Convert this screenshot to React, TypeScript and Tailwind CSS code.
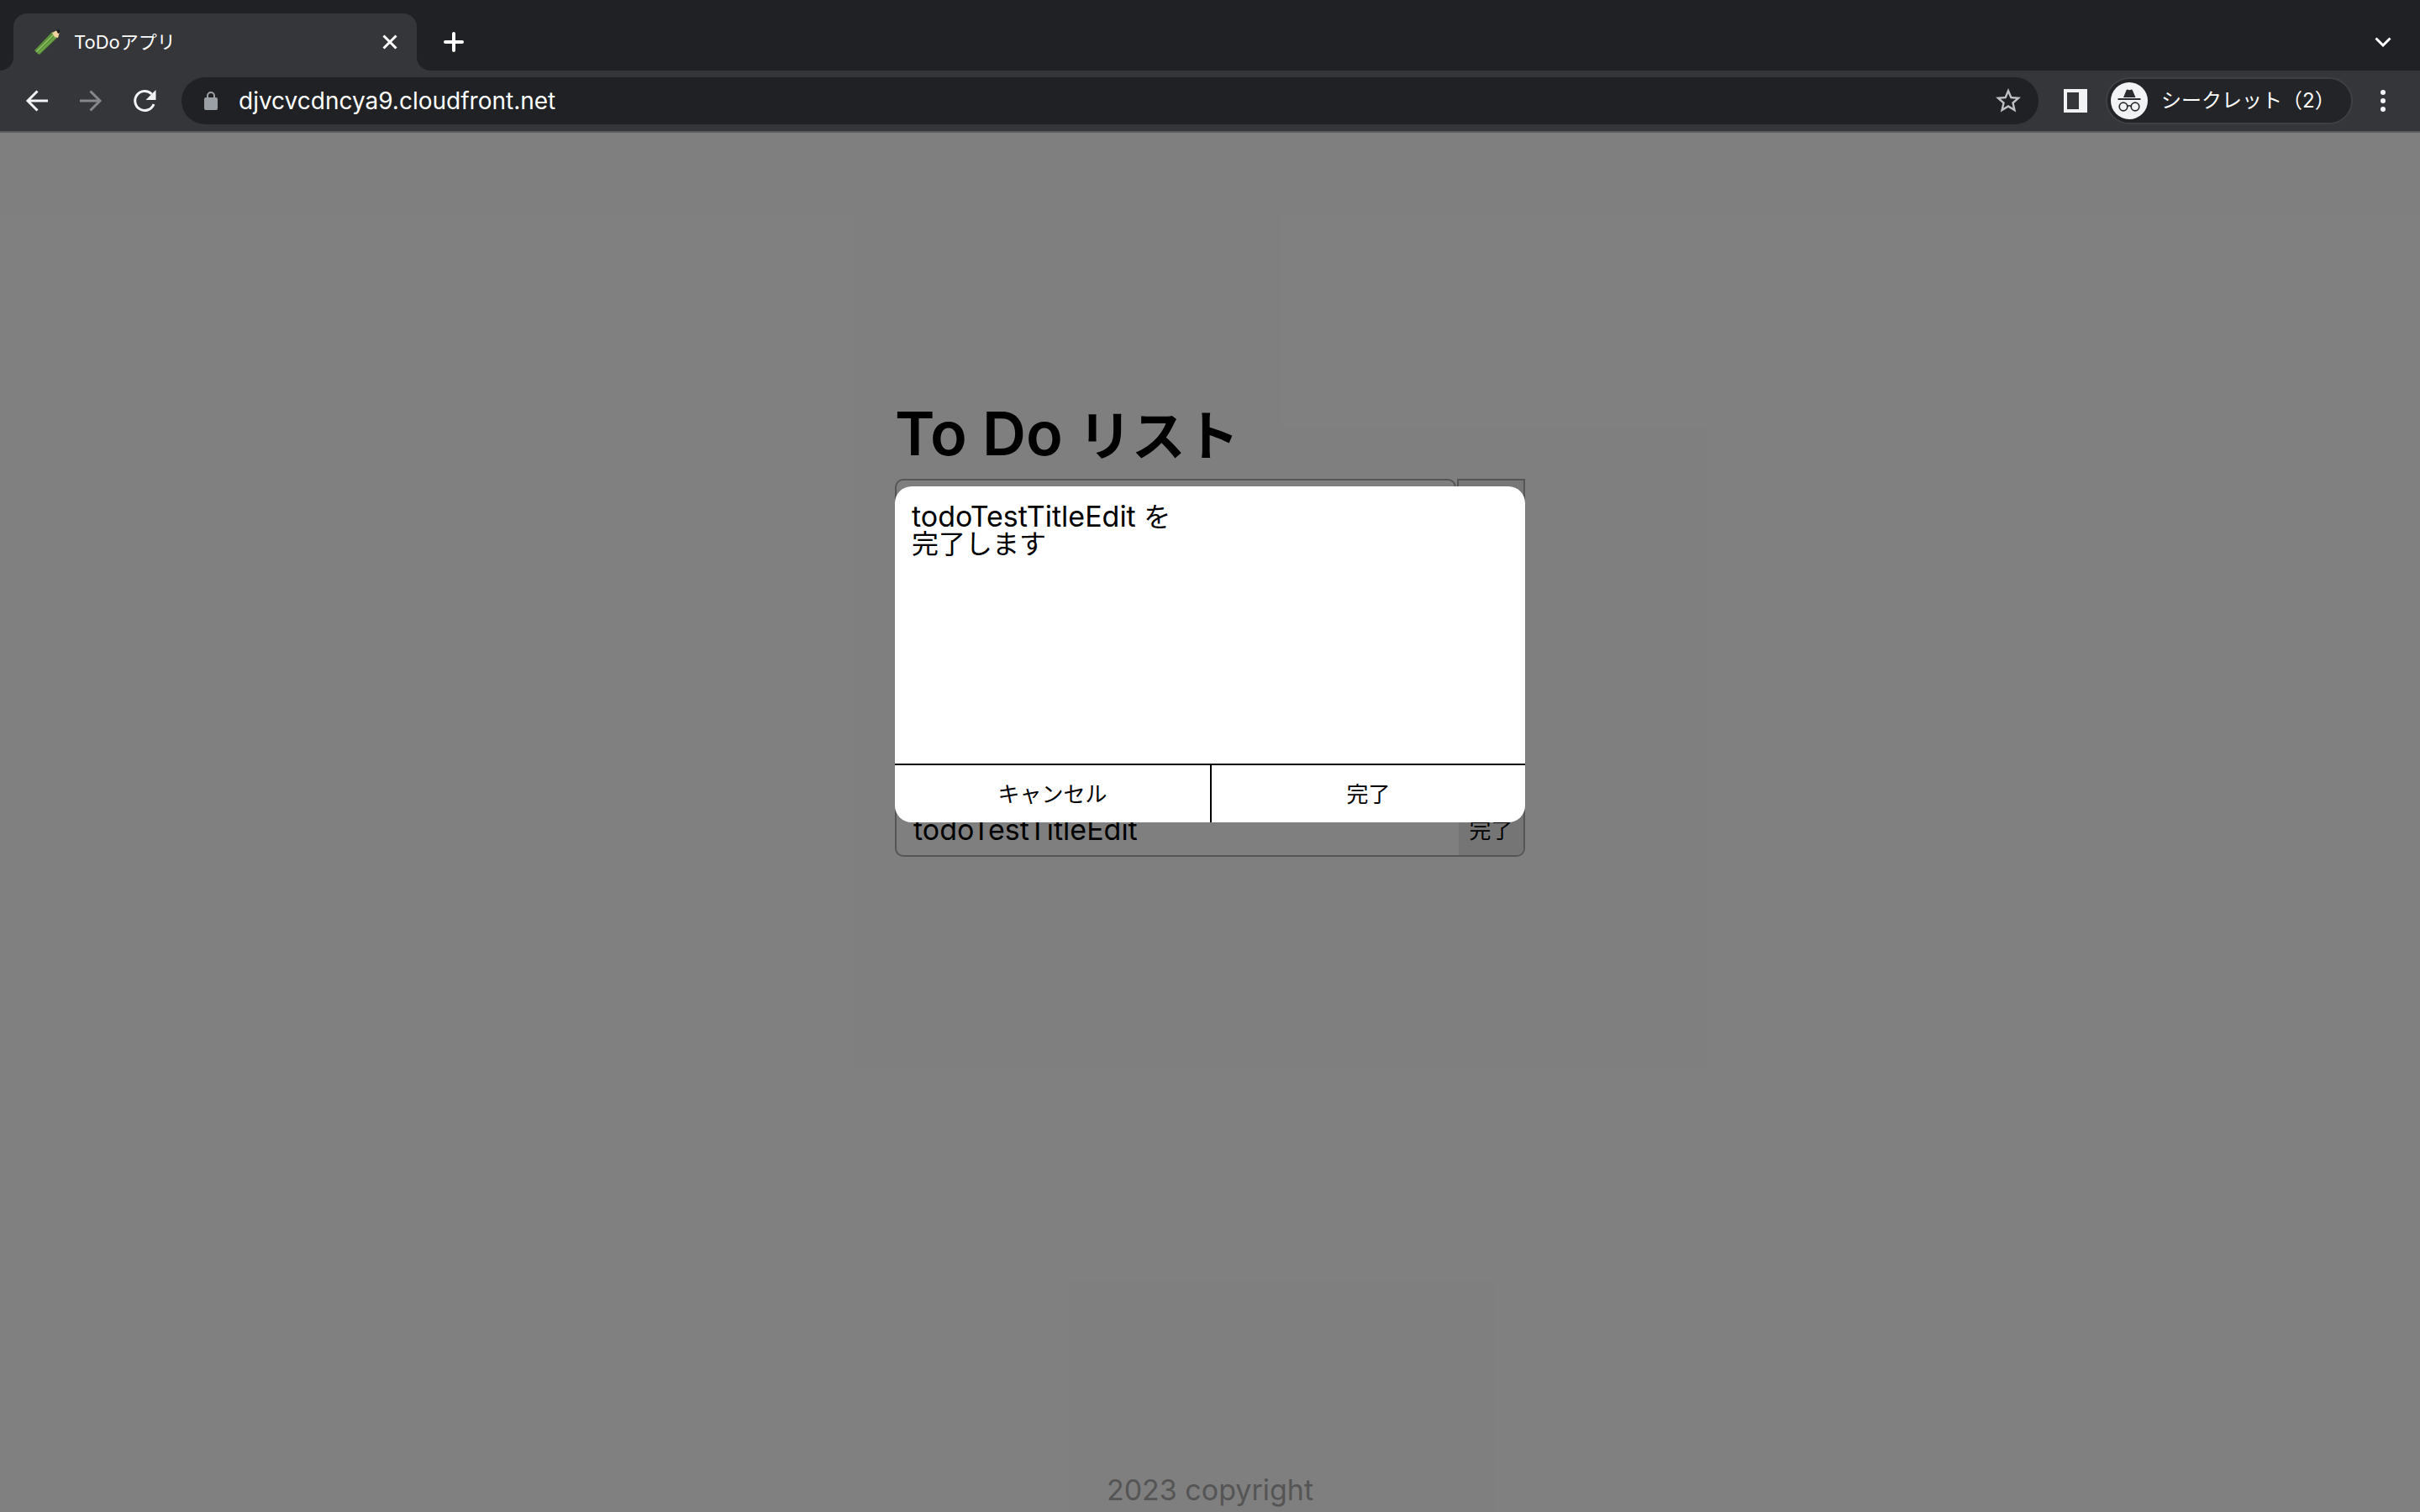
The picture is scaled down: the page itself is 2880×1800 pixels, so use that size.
import React from "react";

function PencilIcon() {
  return (
    <svg viewBox="0 0 32 32" className="size-8 shrink-0" aria-hidden="true">
      <path d="M1 26 22 4l7 6L7 31Z" fill="#5b9138" />
      <path d="M3 28 25 6" stroke="#8fbd68" strokeWidth="1.6" />
      <path d="M5 30 27 9" stroke="#74aa4c" strokeWidth="1.4" />
      <path d="m22 5 6-3 3 2-2 7-4-1Z" fill="#f2d3a0" />
      <path d="m27 2 4-1v4l-2 1Z" fill="#1b1b1b" />
    </svg>
  );
}

function BackIcon() {
  return (
    <svg viewBox="0 0 32 32" className="size-8" fill="none" stroke="currentColor" strokeWidth="3" aria-hidden="true">
      <path d="M29 16H5M16.500 4.500 5 16l11.500 11.500" />
    </svg>
  );
}

function ForwardIcon() {
  return (
    <svg viewBox="0 0 32 32" className="size-8" fill="none" stroke="currentColor" strokeWidth="3" aria-hidden="true">
      <path d="M3 16h24M15.500 4.500 27 16 15.500 27.500" />
    </svg>
  );
}

function ReloadIcon() {
  return (
    <svg viewBox="0 0 32 32" className="size-8" aria-hidden="true">
      <path d="M27 20a11.500 11.500 0 1 1-2.500-12" fill="none" stroke="currentColor" strokeWidth="3" />
      <path d="M29.500 3v12h-12Z" fill="currentColor" />
    </svg>
  );
}

function LockIcon() {
  return (
    <svg viewBox="0 0 18 24" className="h-6 w-[18px] shrink-0 text-[#9aa0a6]" aria-hidden="true">
      <rect x="1" y="8" width="16" height="15" rx="2" fill="currentColor" />
      <path d="M5 9V6a4 4 0 0 1 8 0v3" fill="none" stroke="currentColor" strokeWidth="2" />
    </svg>
  );
}

function StarIcon() {
  return (
    <svg viewBox="0 0 24 24" className="size-9" fill="currentColor" aria-hidden="true">
      <path d="m22 9.240-7.190-.62L12 2 9.190 8.630 2 9.240l5.460 4.730L5.820 21 12 17.270 18.180 21l-1.630-7.030L22 9.240zM12 15.400l-3.760 2.270 1-4.280-3.320-2.880 4.380-.38L12 6.100l1.710 4.040 4.380.38-3.320 2.880 1 4.280L12 15.400z" />
    </svg>
  );
}

function PanelIcon() {
  return (
    <svg viewBox="0 0 28 28" className="size-7" aria-hidden="true">
      <path d="M0 0h28v28H0ZM4 4v20h14V4Z" fill="#f1f3f4" fillRule="evenodd" />
    </svg>
  );
}

function IncognitoIcon() {
  return (
    <svg viewBox="0 0 44 44" className="size-11 shrink-0" aria-hidden="true">
      <circle cx="22" cy="22" r="22" fill="#f1f3f4" />
      <path d="m15 18 3.500-8.500q.5-1.200 1.800-.8l1.900.6 1.900-.6q1.300-.4 1.800.8L29.500 18Z" fill="#2b2c30" />
      <path d="M8.500 20h27" stroke="#2b2c30" strokeWidth="2" />
      <g fill="none" stroke="#2b2c30" strokeWidth="1.700">
        <circle cx="15" cy="29" r="4.800" />
        <circle cx="29" cy="29" r="4.800" />
        <path d="M19.800 28.500q2.200-1.500 4.400 0" />
      </g>
    </svg>
  );
}

function Browser() {
  return (
    <header className="font-['Inter','Noto_Sans_CJK_JP',sans-serif] text-white">
      <div className="flex h-[84px] items-end bg-[#202124]">
        <div className="size-4 bg-[#35363a]">
          <div className="size-4 rounded-br-2xl bg-[#202124]" />
        </div>
        <div className="flex h-[68px] w-[480px] items-center rounded-t-2xl bg-[#35363a] pr-4 pl-6">
          <PencilIcon />
          <span className="ml-4 grow text-[22px]">ToDoアプリ</span>
          <button type="button" aria-label="タブを閉じる" className="grid size-8 place-items-center">
            <svg viewBox="0 0 18 18" className="size-[18px]" stroke="#fff" strokeWidth="3" aria-hidden="true">
              <path d="m1.500 1.500 15 15m0-15-15 15" />
            </svg>
          </button>
        </div>
        <div className="size-4 bg-[#35363a]">
          <div className="size-4 rounded-bl-2xl bg-[#202124]" />
        </div>
        <button type="button" aria-label="新しいタブ" className="mb-[14px] ml-2 grid size-10 place-items-center">
          <svg viewBox="0 0 24 24" className="size-6" stroke="#fff" strokeWidth="4" strokeLinecap="round" aria-hidden="true">
            <path d="M12 2v20M2 12h20" />
          </svg>
        </button>
        <button type="button" aria-label="タブを検索" className="mr-6 mb-[14px] ml-auto grid size-10 place-items-center">
          <svg viewBox="0 0 20 12" className="h-3 w-5" fill="none" stroke="#fff" strokeWidth="3" aria-hidden="true">
            <path d="m1.500 1.500 8.500 8.500 8.500-8.500" />
          </svg>
        </button>
      </div>

      <div className="flex h-[74px] items-center border-b-2 border-[#5b5c5f] bg-[#35363a] pr-6 pl-7">
        <nav className="flex gap-8 text-[#f1f3f4]">
          <button type="button" aria-label="戻る"><BackIcon /></button>
          <button type="button" aria-label="進む" className="text-[#86878a]"><ForwardIcon /></button>
          <button type="button" aria-label="再読み込み"><ReloadIcon /></button>
        </nav>
        <div className="ml-7 flex h-14 grow items-center rounded-full bg-[#202124] pr-[18px] pl-[26px]">
          <LockIcon />
          <input
            aria-label="アドレスバー"
            defaultValue="djvcvcdncya9.cloudfront.net"
            className="ml-6 h-10 grow bg-transparent text-[28px] outline-none"
          />
          <button type="button" aria-label="ブックマーク" className="text-[#bdc1c6]"><StarIcon /></button>
        </div>
        <button type="button" aria-label="サイドパネル" className="ml-[30px]"><PanelIcon /></button>
        <button type="button" className="ml-[22px] flex h-14 w-[294px] items-center rounded-full border-2 border-[#3f4045] bg-[#232428] pl-1 text-2xl">
          <IncognitoIcon />
          <span className="ml-4 whitespace-nowrap">シークレット（2）</span>
        </button>
        <button type="button" aria-label="メニュー" className="ml-4 grid size-10 place-items-center">
          <svg viewBox="0 0 6 28" className="h-7 w-[6px]" fill="#f1f3f4" aria-hidden="true">
            <circle cx="3" cy="4" r="3" />
            <circle cx="3" cy="14" r="3" />
            <circle cx="3" cy="24" r="3" />
          </svg>
        </button>
      </div>
    </header>
  );
}

function TodoPage() {
  return (
    <>
      <main className="mx-auto w-[750px] grow pt-[308px]">
        <h1 className="h-[104px] text-[72px] leading-[100px] font-semibold whitespace-nowrap">
          To Do <span className="text-[64px]">リスト</span>
        </h1>
        <form className="flex justify-between">
          <input aria-label="タイトル" className="h-16 w-[668px] rounded-[10px] border-2 border-[#aaa] px-5" />
          <button type="button" aria-label="追加" className="w-[81px] border-2 border-[#aaa] bg-[#efefef]" />
        </form>
        <ul className="mt-[322px]">
          <li className="flex h-16 overflow-hidden rounded-[10px] border-2 border-[#aaa]">
            <span className="grow pl-5 text-[34px] leading-[60px]">todoTestTitleEdit</span>
            <button type="button" className="w-[77px] bg-[#ebebeb] text-[26px]">完了</button>
          </li>
        </ul>
      </main>
      <footer className="text-center text-[34px] leading-[52px] text-[#aaa]">2023 copyright</footer>
    </>
  );
}

function ConfirmDialog() {
  return (
    <div className="absolute inset-0 bg-black/50 pt-[421px]">
      <div role="dialog" aria-modal="true" aria-labelledby="confirm-text" className="mx-auto flex h-[400px] w-[750px] flex-col overflow-hidden rounded-[20px] bg-white">
        <p id="confirm-text" className="grow px-5 pt-5 text-[32px] leading-8">
          <span className="text-[34px]">todoTestTitleEdit </span>を<br />完了します
        </p>
        <div className="grid h-[70px] grid-cols-2 border-t-2 border-black text-[26px]">
          <button type="button">キャンセル</button>
          <button type="button" className="border-l-2 border-black">完了</button>
        </div>
      </div>
    </div>
  );
}

export default function App() {
  return (
    <div className="flex min-h-screen flex-col">
      <Browser />
      <div className="relative flex grow flex-col bg-white font-['Inter','Noto_Sans_CJK_JP',sans-serif] text-black">
        <TodoPage />
        <ConfirmDialog />
      </div>
    </div>
  );
}
